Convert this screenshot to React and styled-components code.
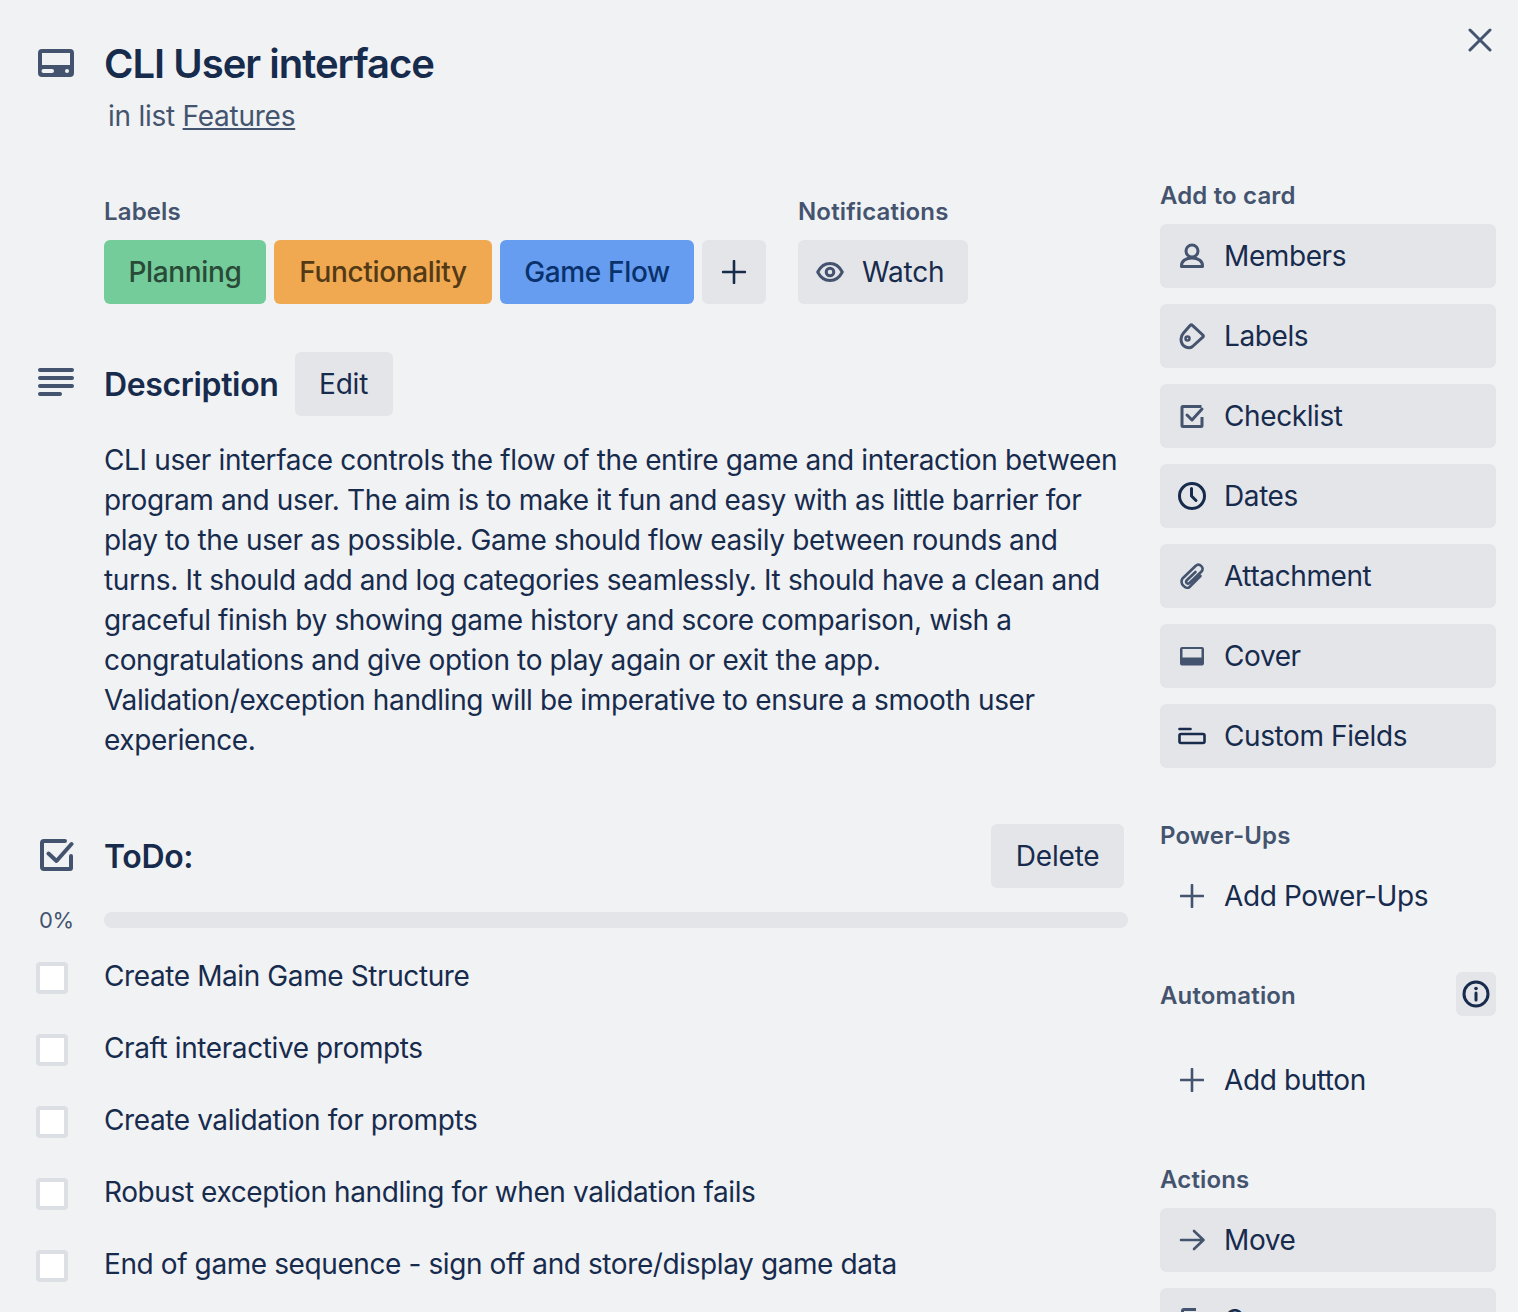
import React from 'react';
import styled, { createGlobalStyle } from 'styled-components';

const GlobalStyle = createGlobalStyle`
  html, body {
    margin: 0;
    padding: 0;
    background: #f1f2f4;
  }
  * {
    box-sizing: border-box;
  }
`;

const DARK = '#172b4d';
const SLATE = '#44546f';

const Icon32 = ({ children, ...rest }) => (
  <svg width='32' height='32' viewBox='0 0 32 32' fill='none' stroke='currentColor' strokeWidth='3' {...rest}>
    {children}
  </svg>
);

const IcCardCover = () => (
  <svg width='36' height='28' viewBox='0 0 36 28'>
    <path
      fillRule='evenodd'
      fill='currentColor'
      d='M4 0h28a4 4 0 0 1 4 4v20a4 4 0 0 1-4 4H4a4 4 0 0 1-4-4V4a4 4 0 0 1 4-4zM4 4v12h28V4H4zm1.5 16a2 2 0 0 0 0 4h8.5a2 2 0 0 0 0-4H5.5zM29 20a2 2 0 1 0 0 4 2 2 0 0 0 0-4z'
    />
  </svg>
);

const IcDescription = () => (
  <svg width='36' height='28' viewBox='0 0 36 28' fill='currentColor'>
    <rect x='0' y='0' width='36' height='4' rx='2' />
    <rect x='0' y='8' width='36' height='4' rx='2' />
    <rect x='0' y='16' width='36' height='4' rx='2' />
    <rect x='0' y='24' width='24' height='4' rx='2' />
  </svg>
);

const IcTodo = () => (
  <svg width='34' height='32' viewBox='0 0 34 32' fill='none' stroke='currentColor' strokeWidth='4'>
    <path d='M25 2H4a2 2 0 0 0-2 2v24a2 2 0 0 0 2 2h26a1 1 0 0 0 1-1V17' strokeLinecap='round' />
    <path d='M8.5 14.5l8 7.5 15-17' strokeLinecap='round' strokeLinejoin='round' />
  </svg>
);

const IcClose = () => (
  <svg width='24' height='24' viewBox='0 0 24 24' fill='none' stroke='currentColor' strokeWidth='3' strokeLinecap='round'>
    <path d='M2 2l20 20M22 2L2 22' />
  </svg>
);

const IcPlus = ({ size = 24 }) => (
  <svg width={size} height={size} viewBox='0 0 24 24' fill='none' stroke='currentColor' strokeWidth='2.6' strokeLinecap='round'>
    <path d='M12 1v22M1 12h22' />
  </svg>
);

const IcEye = () => (
  <svg width='28' height='24' viewBox='0 0 28 24' fill='none' stroke='currentColor' strokeWidth='3'>
    <path d='M1.7 12C4.5 6.5 8.8 3.5 14 3.5S23.5 6.500 26.300 12C23.500 17.500 19.200 20.500 14 20.500S4.500 17.500 1.700 12z' strokeLinejoin='round' />
    <circle cx='14' cy='12' r='3.800' />
  </svg>
);

const IcMembers = () => (
  <Icon32>
    <circle cx='16' cy='11' r='6' />
    <path d='M5.500 26.500v-1c0-4.500 4.500-7.500 10.500-7.500s10.500 3 10.500 7.500v1z' strokeLinejoin='round' />
  </Icon32>
);

const IcLabels = () => (
  <Icon32>
    <path d='M14.300 5.300a1.500 1.500 0 0 1 2.100 0L26.800 15a1.500 1.500 0 0 1 0 2.100L16.500 26.500c-3.500 3-11.500.5-11.500-7.500 0-2.500.7-4 2.500-6z' strokeLinejoin='round' />
    <circle cx='11.500' cy='18.500' r='2' strokeWidth='2.500' />
  </Icon32>
);

const IcChecklist = () => (
  <Icon32>
    <path d='M25.500 6.500H7a1 1 0 0 0-1 1v18a1 1 0 0 0 1 1h18a1 1 0 0 0 1-1V17' />
    <path d='M11 15l5 5 10-11' strokeLinecap='round' strokeLinejoin='round' />
  </Icon32>
);

const IcDates = () => (
  <Icon32>
    <circle cx='16' cy='16' r='12.500' />
    <path d='M15.500 8.500v7.500l4.500 4.500' strokeLinecap='round' strokeLinejoin='round' />
  </Icon32>
);

const IcAttachment = () => (
  <Icon32 strokeWidth='2.600'>
    <path
      d='M24.500 16L13.500 27C10.500 30 3 24 6.500 18.500L19.500 6C23.500 2.500 29 8 25.500 11.500L13.500 23C11 25 9 22 11 20L19.500 12'
      strokeLinecap='round'
      strokeLinejoin='round'
    />
  </Icon32>
);

const IcCover = () => (
  <svg width='32' height='32' viewBox='0 0 32 32'>
    <path
      fillRule='evenodd'
      fill='currentColor'
      d='M6 7h20a2 2 0 0 1 2 2v14.500a2 2 0 0 1-2 2H6a2 2 0 0 1-2-2V9a2 2 0 0 1 2-2zM6.500 9v8.500h19V9h-19z'
    />
  </svg>
);

const IcCustomFields = () => (
  <Icon32 strokeWidth='2.600'>
    <path d='M3.500 9h11' strokeLinecap='round' />
    <rect x='3.500' y='14' width='25' height='9' rx='1.500' />
  </Icon32>
);

const IcArrow = () => (
  <svg width='32' height='32' viewBox='0 0 32 32' fill='none' stroke='currentColor' strokeWidth='2.600' strokeLinecap='round' strokeLinejoin='round'>
    <path d='M5 16h22M18 7l9.500 9-9.500 9' />
  </svg>
);

const IcInfo = () => (
  <svg width='28' height='28' viewBox='0 0 28 28' fill='none' stroke='currentColor' strokeWidth='3'>
    <circle cx='14' cy='14' r='12' />
    <path d='M14 13v7' strokeLinecap='round' />
    <circle cx='14' cy='8.500' r='1.800' fill='currentColor' stroke='none' />
  </svg>
);

const IcCopy = () => (
  <Icon32>
    <path d='M20 5.500H8a1.500 1.500 0 0 0-1.500 1.500v14' />
    <rect x='11' y='11' width='15' height='15' rx='2' />
  </Icon32>
);

const LABELS = [
  { name: 'Planning', bg: '#74cc9a', color: '#2a4a38', width: 162 },
  { name: 'Functionality', bg: '#f0a851', color: '#533a16', width: 218 },
  { name: 'Game Flow', bg: '#669df1', color: '#09326c', width: 194 },
];

const TODOS = [
  'Create Main Game Structure',
  'Craft interactive prompts',
  'Create validation for prompts',
  'Robust exception handling for when validation fails',
  'End of game sequence - sign off and store/display game data',
];

const ADD_TO_CARD = [
  { name: 'Members', icon: <IcMembers /> },
  { name: 'Labels', icon: <IcLabels /> },
  { name: 'Checklist', icon: <IcChecklist /> },
  { name: 'Dates', icon: <IcDates />, dark: true },
  { name: 'Attachment', icon: <IcAttachment /> },
  { name: 'Cover', icon: <IcCover /> },
  { name: 'Custom Fields', icon: <IcCustomFields />, dark: true },
];

const App = () => {
  return (
    <StPage>
      <GlobalStyle />
      <StClose type='button'>
        <IcClose />
      </StClose>

      <StHeader>
        <StGutter $top={9}>
          <IcCardCover />
        </StGutter>
        <div>
          <StTitle>CLI User interface</StTitle>
          <StInList>
            in list <a href='#features'>Features</a>
          </StInList>
        </div>
      </StHeader>

      <StBody>
        <StMain>
          <StMeta>
            <div>
              <StHeading>Labels</StHeading>
              <StLabelRow>
                {LABELS.map(({ name, bg, color, width }) => (
                  <StLabel key={name} $bg={bg} $color={color} $width={width}>
                    {name}
                  </StLabel>
                ))}
                <StAddLabel type='button'>
                  <IcPlus />
                </StAddLabel>
              </StLabelRow>
            </div>
            <div>
              <StHeading>Notifications</StHeading>
              <StWatch type='button'>
                <StWatchIcon>
                  <IcEye />
                </StWatchIcon>
                Watch
              </StWatch>
            </div>
          </StMeta>

          <StSectionHead>
            <StGutter $top={16}>
              <IcDescription />
            </StGutter>
            <StSectionTitle>Description</StSectionTitle>
            <StButton type='button'>Edit</StButton>
          </StSectionHead>
          <StDescription>
            CLI user interface controls the flow of the entire game and interaction between program and user. The aim is
            to make it fun and easy with as little barrier for play to the user as possible. Game should flow easily
            between rounds and turns. It should add and log categories seamlessly. It should have a clean and graceful
            finish by showing game history and score comparison, wish a congratulations and give option to play again or
            exit the app.
            <br />
            Validation/exception handling will be imperative to ensure a smooth user experience.
          </StDescription>

          <StTodoHead>
            <StGutter $top={15} $left={40}>
              <IcTodo />
            </StGutter>
            <StSectionTitle>ToDo:</StSectionTitle>
            <StDelete type='button'>Delete</StDelete>
          </StTodoHead>
          <StProgressRow>
            <StPercent>0%</StPercent>
            <StProgress />
          </StProgressRow>
          <StTodoList>
            {TODOS.map((todo) => (
              <StTodo key={todo}>
                <StCheck />
                {todo}
              </StTodo>
            ))}
          </StTodoList>
        </StMain>

        <StSide>
          <StHeading>Add to card</StHeading>
          <StStack>
            {ADD_TO_CARD.map(({ name, icon, dark }) => (
              <StSideButton key={name} type='button'>
                <StSideIcon $dark={dark}>{icon}</StSideIcon>
                {name}
              </StSideButton>
            ))}
          </StStack>

          <StSideHeading $mt={52}>Power-Ups</StSideHeading>
          <StSideButton type='button' $ghost>
            <StSideIcon>
              <IcPlus />
            </StSideIcon>
            Add Power-Ups
          </StSideButton>

          <StAutomationHead>
            <StAutomationTitle as='span'>Automation</StAutomationTitle>
            <StInfo type='button'>
              <IcInfo />
            </StInfo>
          </StAutomationHead>
          <StSideButton type='button' $ghost>
            <StSideIcon>
              <IcPlus />
            </StSideIcon>
            Add button
          </StSideButton>

          <StSideHeading $mt={52}>Actions</StSideHeading>
          <StStack>
            <StSideButton type='button'>
              <StSideIcon>
                <IcArrow />
              </StSideIcon>
              Move
            </StSideButton>
            <StSideButton type='button'>
              <StSideIcon>
                <IcCopy />
              </StSideIcon>
              Copy
            </StSideButton>
          </StStack>
        </StSide>
      </StBody>
    </StPage>
  );
};

export default App;

const StPage = styled.div`
  position: relative;
  width: 1518px;
  height: 1312px;
  overflow: hidden;
  padding-top: 40px;

  font-family: 'Inter', 'Liberation Sans', sans-serif;
  font-size: 28px;
  line-height: 40px;
  letter-spacing: -0.4px;
  color: ${DARK};
  background-color: #f1f2f4;
`;

const StClose = styled.button`
  position: absolute;
  top: 28px;
  right: 26px;
  display: flex;
  padding: 0;
  border: none;
  background: none;
  color: ${SLATE};
`;

const StHeader = styled.header`
  position: relative;
  padding-left: 104px;
  height: 124px;
`;

const StGutter = styled.span`
  position: absolute;
  top: ${(props) => props.$top}px;
  left: ${(props) => props.$left || 38}px;
  display: flex;
  color: ${SLATE};
`;

const StTitle = styled.h1`
  margin: 0;
  font-size: 40px;
  font-weight: 600;
  line-height: 48px;
  letter-spacing: -1px;
`;

const StInList = styled.p`
  margin: 8px 0 0 4px;
  letter-spacing: -0.25px;
  color: ${SLATE};

  a {
    color: ${SLATE};
    text-decoration: underline;
  }
`;

const StBody = styled.div`
  display: flex;
  gap: 32px;
  padding: 16px 22px 0 104px;
`;

const StMain = styled.main`
  width: 1024px;
  flex-shrink: 0;
`;

const StMeta = styled.section`
  display: flex;
  gap: 32px;
  padding-top: 16px;
`;

const StHeading = styled.h3`
  margin: 0 0 12px;
  font-size: 24px;
  font-weight: 600;
  line-height: 32px;
  letter-spacing: 0.15px;
  color: ${SLATE};
`;

const StSideHeading = styled(StHeading)`
  margin-top: ${(props) => props.$mt}px;
`;

const StAutomationTitle = styled(StHeading)`
  position: relative;
  top: 2px;
`;

const StLabelRow = styled.div`
  display: flex;
  gap: 8px;
`;

const StLabel = styled.span`
  width: ${(props) => props.$width}px;
  height: 64px;
  padding: 12px 0;
  border-radius: 6px;
  text-align: center;
  font-weight: 500;
  letter-spacing: -0.35px;
  color: ${(props) => props.$color};
  background-color: ${(props) => props.$bg};
`;

const StButton = styled.button`
  height: 64px;
  padding: 0 24.5px;
  border: none;
  border-radius: 6px;
  font: inherit;
  letter-spacing: -0.2px;
  color: ${DARK};
  background-color: #e4e5e9;
`;

const StAddLabel = styled(StButton)`
  display: flex;
  align-items: center;
  justify-content: center;
  width: 64px;
  padding: 0;
`;

const StWatch = styled(StButton)`
  display: flex;
  align-items: center;
  gap: 18px;
  padding: 0 24px 0 18px;
`;

const StWatchIcon = styled.span`
  display: flex;
  color: ${SLATE};
`;

const StSectionHead = styled.div`
  position: relative;
  display: flex;
  align-items: center;
  gap: 16px;
  margin: 48px 0 0 -66px;
  padding-left: 66px;
  height: 64px;

  & > span {
    left: 0;
  }
`;

const StSectionTitle = styled.h2`
  position: relative;
  top: 1px;
  margin: 0;
  font-size: 32px;
  font-weight: 600;
  line-height: 40px;
  letter-spacing: -0.35px;
`;

const StDescription = styled.p`
  margin: 24px 0 0;
  letter-spacing: -0.36px;
`;

const StTodoHead = styled(StSectionHead)`
  justify-content: flex-start;
  margin-top: 64px;
  width: 1086px;

  & > span {
    left: 2px;
  }
`;

const StDelete = styled(StButton)`
  margin-left: auto;
`;

const StProgressRow = styled.div`
  position: relative;
  display: flex;
  align-items: center;
  height: 16px;
  margin-top: 24px;
`;

const StPercent = styled.span`
  position: absolute;
  left: -65px;
  font-size: 22px;
  color: ${SLATE};
`;

const StProgress = styled.div`
  width: 100%;
  height: 16px;
  border-radius: 8px;
  background-color: #e4e5e9;
`;

const StTodoList = styled.ul`
  display: flex;
  flex-direction: column;
  gap: 32px;
  margin: 28px 0 0;
  padding: 0;
  list-style: none;
`;

const StTodo = styled.li`
  position: relative;
`;

const StCheck = styled.span`
  position: absolute;
  top: 6px;
  left: -68px;
  width: 32px;
  height: 32px;
  border: 4px solid #dcdfe4;
  border-radius: 4px;
  background-color: #ffffff;
`;

const StSide = styled.aside`
  width: 336px;
  flex-shrink: 0;
`;

const StStack = styled.div`
  display: flex;
  flex-direction: column;
  gap: 16px;
`;

const StSideButton = styled.button`
  display: flex;
  align-items: center;
  gap: 16px;
  width: 100%;
  height: 64px;
  padding: 0 16px;
  border: none;
  border-radius: 6px;
  font: inherit;
  letter-spacing: inherit;
  font-weight: 400;
  color: ${DARK};
  background-color: ${(props) => (props.$ghost ? 'transparent' : '#e4e5e9')};
`;

const StSideIcon = styled.span`
  display: flex;
  align-items: center;
  justify-content: center;
  width: 32px;
  height: 32px;
  color: ${(props) => (props.$dark ? DARK : SLATE)};
`;

const StAutomationHead = styled.div`
  display: flex;
  align-items: center;
  justify-content: space-between;
  margin-top: 44px;
  margin-bottom: 32px;
  height: 44px;

  & > span {
    margin: 0;
  }
`;

const StInfo = styled.button`
  display: flex;
  align-items: center;
  justify-content: center;
  width: 40px;
  height: 44px;
  padding: 0;
  border: none;
  border-radius: 6px;
  color: ${DARK};
  background-color: #e4e5e9;
`;
